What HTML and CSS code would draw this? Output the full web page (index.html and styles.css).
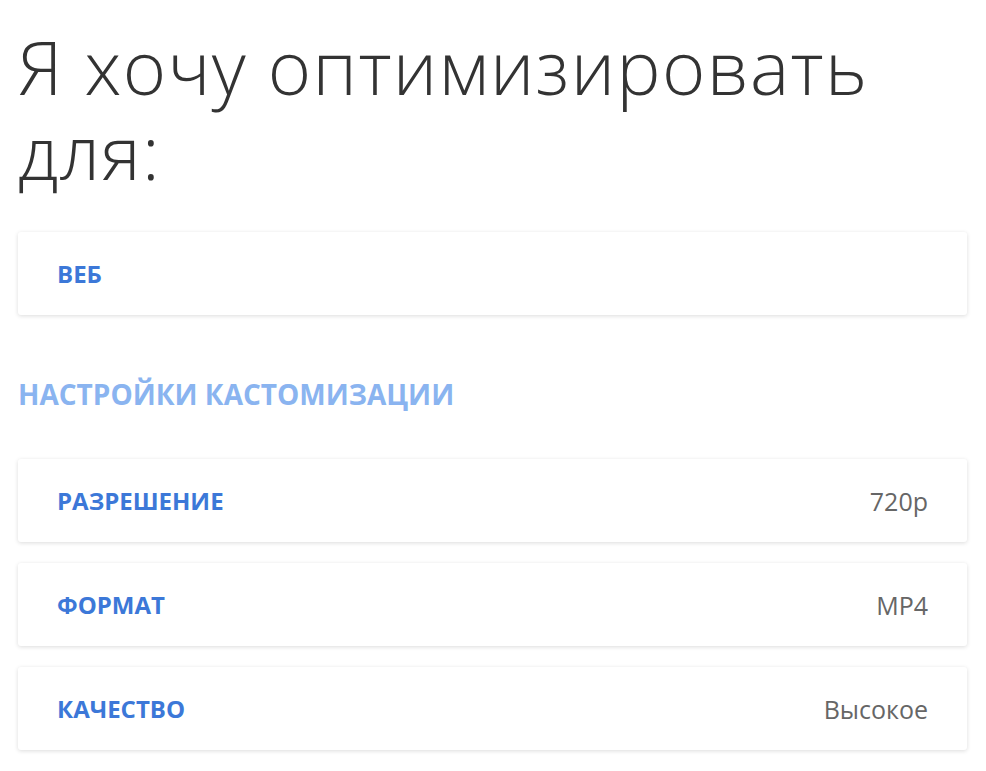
FILE: index.html
```html
<!DOCTYPE html>
<html lang="ru">
<head>
  <meta charset="UTF-8">
  <title>Оптимизация видео</title>
  <link rel="stylesheet" href="styles.css">
</head>
<body>

<div class="page">
  <h1>Я хочу оптимизировать для:</h1>

  <div class="option">
    <span class="option-label">Веб</span>
  </div>

  <h3 class="section-title">Настройки кастомизации</h3>

  <div class="option">
    <span class="option-label">Разрешение</span>
    <span class="option-value">720p</span>
  </div>
  <div class="option">
    <span class="option-label">Формат</span>
    <span class="option-value">MP4</span>
  </div>
  <div class="option">
    <span class="option-label">Качество</span>
    <span class="option-value">Высокое</span>
  </div>
</div>

</body>
</html>
```

FILE: styles.css
```css
* { box-sizing: border-box; }
body {
  margin: 0;
  font-family: "Open Sans", Arial, sans-serif;
  background-color: #ffffff;
}
.page {
  padding: 24px 19px 20px 18px;
  display: flex;
  flex-direction: column;
}
h1 {
  margin: 0 0 38px;
  font-size: 74px;
  font-weight: 300;
  line-height: 85px;
  color: #333333;
  letter-spacing: 1.4px;
  max-width: 900px;
}
.option {
  display: flex;
  justify-content: space-between;
  align-items: center;
  height: 83px;
  padding: 0 39px;
  background-color: #fff;
  border-radius: 3px;
  box-shadow: 0 1px 4px rgba(0, 0, 0, 0.14);
  margin-bottom: 21px;
}
.option-label {
  font-size: 24px;
  font-weight: 700;
  text-transform: uppercase;
  color: #3c78d8;
}
.option-value {
  font-size: 25px;
  color: #666666;
}
.section-title {
  margin: 39px 0 46px;
  font-size: 28px;
  font-weight: 700;
  text-transform: uppercase;
  color: #8ab4f0;
}
```
